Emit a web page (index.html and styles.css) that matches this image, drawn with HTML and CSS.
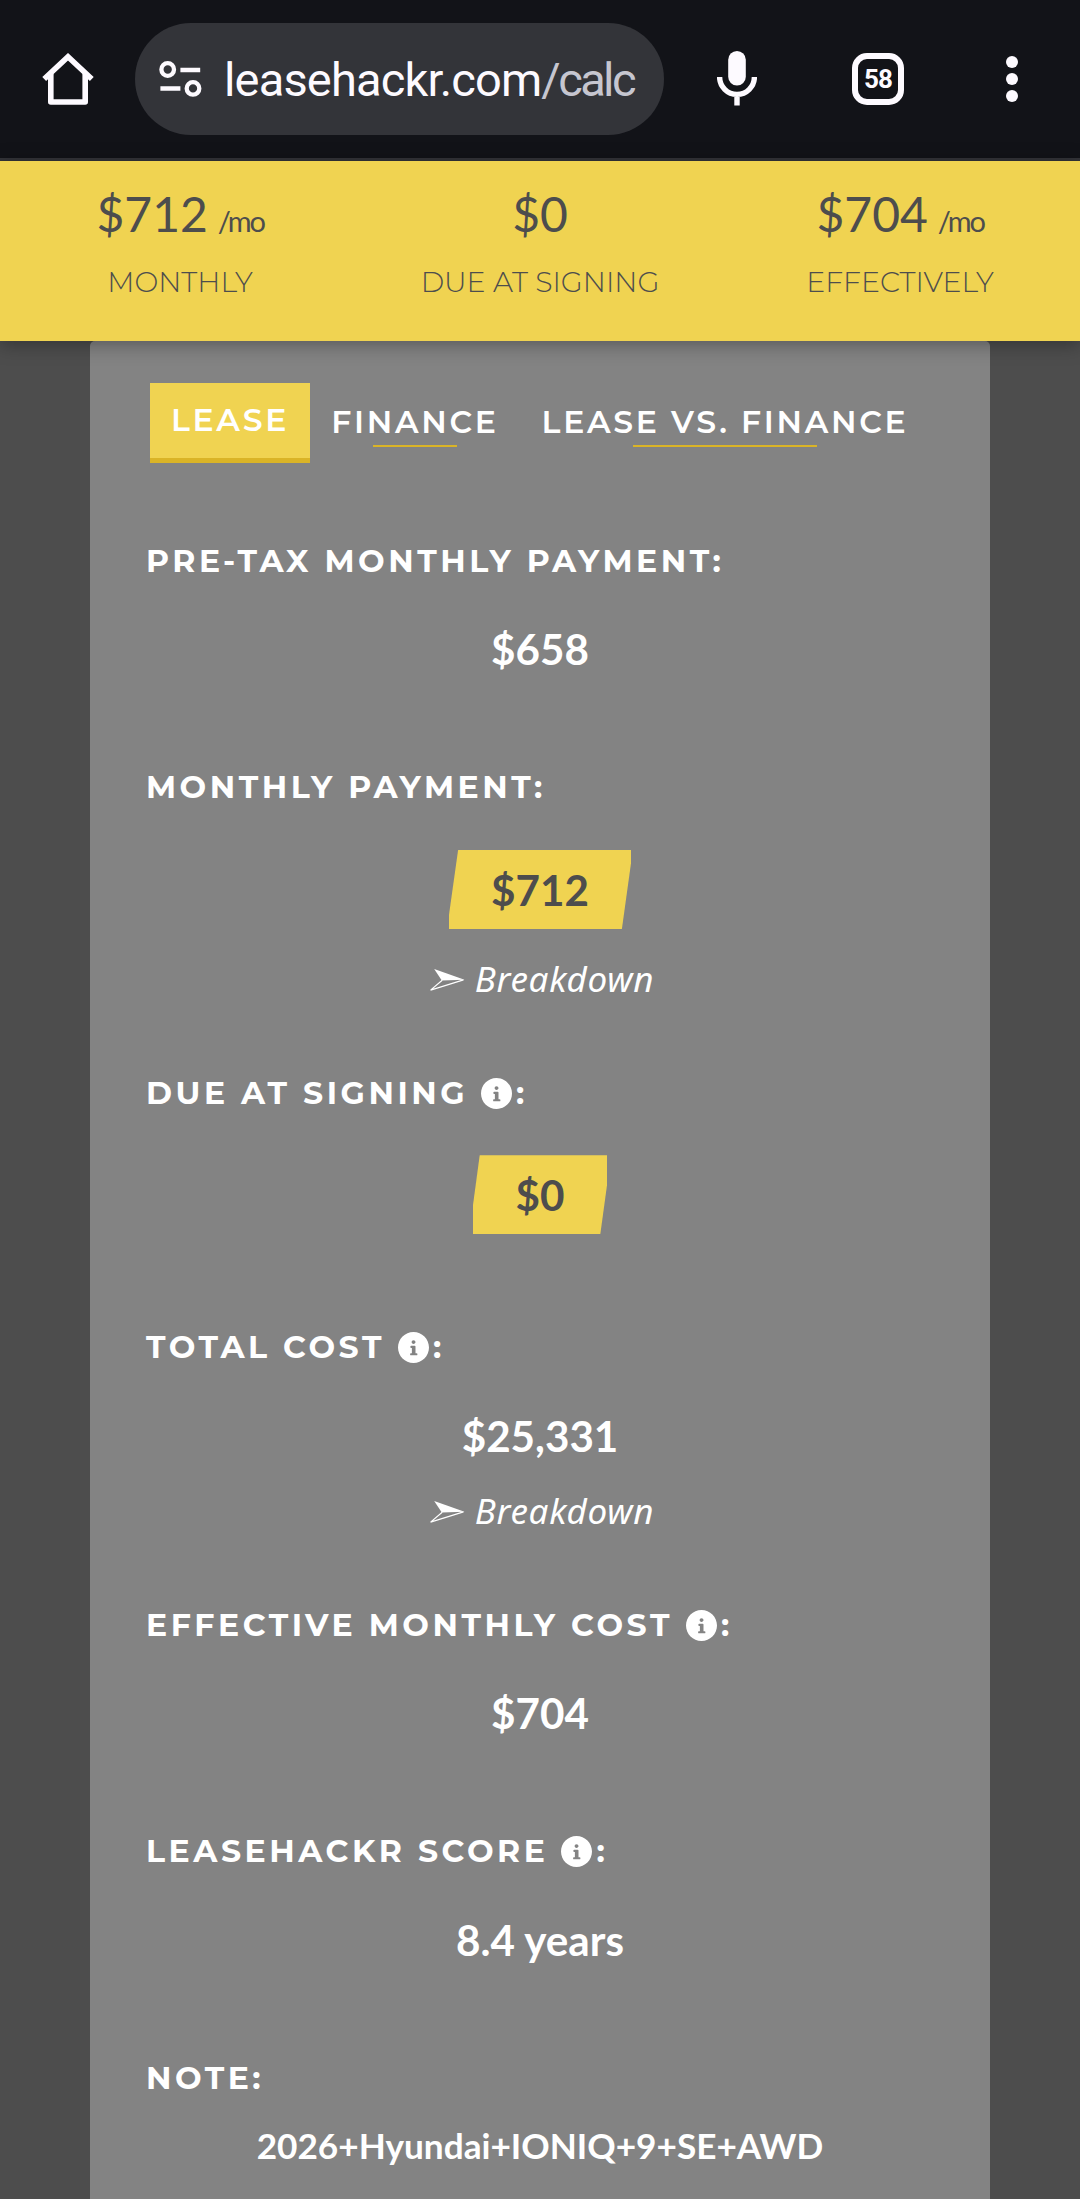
FILE: index.html
```html
<!DOCTYPE html>
<html lang="en">
<head>
  <meta charset="UTF-8">
  <meta name="viewport" content="width=device-width, initial-scale=1.0">
  <title>Leasehackr Calculator</title>
  <link rel="stylesheet" href="styles.css">
</head>
<body>
  <svg class="defs" width="0" height="0" aria-hidden="true">
    <symbol id="info" viewBox="8 8 496 496">
      <path d="M256 8C119.043 8 8 119.083 8 256c0 136.997 111.043 248 248 248s248-111.003 248-248C504 119.083 392.957 8 256 8zm0 130c18 0 32 14 32 30s-14 30-32 30-30-14-30-30 12-30 30-30zm62 232c0 6.627-5.373 10-12 10h-92c-6.627 0-12-3.373-12-10v-14c0-6.627 5.373-10 12-10h16v-84h-12c-6.627 0-12-3.373-12-10v-14c0-6.627 5.373-10 12-10h58c6.627 0 12 5.373 12 12v106h18c6.627 0 12 3.373 12 10v14z"/>
    </symbol>
    <symbol id="arrow" viewBox="0 0 36 22">
      <path d="M5.2 0L35.5 10.8L12.8 11.4Z"/>
      <path d="M13.2 11.2L1.6 21.1L34.5 10.9" fill="none" stroke="currentColor" stroke-width="1.2"/>
    </symbol>
  </svg>

  <div class="browser-bar">
    <svg class="home" width="52" height="52" viewBox="0 0 52 52" fill="none" stroke="currentColor" stroke-width="5.6" stroke-linejoin="round">
      <path d="M2.2 26L26 3.8L49.8 26" stroke-linejoin="miter"/>
      <path d="M8.8 21V49H43.2V21"/>
    </svg>
    <div class="address">
      <svg width="43" height="38" viewBox="0 0 43 38" fill="none" stroke="currentColor" stroke-width="4.3">
        <circle cx="8.7" cy="9.5" r="6.3"/>
        <path d="M21.4 10H41.2M1.4 28.5H21.4"/>
        <circle cx="34" cy="28.4" r="6.3"/>
      </svg>
      <span class="url">leasehackr.com</span><span class="path">/calc</span>
    </div>
    <svg class="mic" width="40" height="56" viewBox="0 0 40 56">
      <rect x="11.2" y="0" width="17.6" height="34.5" rx="8.8" fill="currentColor"/>
      <path d="M2.6 26a17.4 17.4 0 0 0 34.8 0M20 43V54.5" fill="none" stroke="currentColor" stroke-width="5.4"/>
    </svg>
    <div class="tab-count">58</div>
    <svg class="menu" width="12" height="48" viewBox="0 0 12 48" fill="currentColor">
      <circle cx="6" cy="7" r="6"/>
      <circle cx="6" cy="24" r="6"/>
      <circle cx="6" cy="41" r="6"/>
    </svg>
  </div>

  <header class="summary">
    <div class="summary-item">
      <div class="amount">$712<small>/mo</small></div>
      <div class="caption">MONTHLY</div>
    </div>
    <div class="summary-item">
      <div class="amount">$0</div>
      <div class="caption">DUE AT SIGNING</div>
    </div>
    <div class="summary-item">
      <div class="amount">$704<small>/mo</small></div>
      <div class="caption">EFFECTIVELY</div>
    </div>
  </header>

  <main class="panel">
    <nav class="tabs">
      <a class="tab active">LEASE</a>
      <a class="tab finance">FINANCE</a>
      <a class="tab versus">LEASE VS. FINANCE</a>
    </nav>

    <section class="item">
      <h4 class="label">PRE-TAX MONTHLY PAYMENT:</h4>
      <div class="value">$658</div>
    </section>

    <section class="item">
      <h4 class="label">MONTHLY PAYMENT:</h4>
      <div class="value highlight">$712</div>
      <div class="breakdown"><svg width="36" height="22"><use href="#arrow"/></svg>Breakdown</div>
    </section>

    <section class="item">
      <h4 class="label">DUE AT SIGNING<svg width="31" height="31"><use href="#info"/></svg>:</h4>
      <div class="value highlight short">$0</div>
    </section>

    <section class="item">
      <h4 class="label">TOTAL COST<svg width="31" height="31"><use href="#info"/></svg>:</h4>
      <div class="value">$25,331</div>
      <div class="breakdown"><svg width="36" height="22"><use href="#arrow"/></svg>Breakdown</div>
    </section>

    <section class="item">
      <h4 class="label">EFFECTIVE MONTHLY COST<svg width="31" height="31"><use href="#info"/></svg>:</h4>
      <div class="value">$704</div>
    </section>

    <section class="item">
      <h4 class="label">LEASEHACKR SCORE<svg width="31" height="31"><use href="#info"/></svg>:</h4>
      <div class="value">8.4 years</div>
    </section>

    <section class="item">
      <h4 class="label">NOTE:</h4>
      <div class="note">2026+Hyundai+IONIQ+9+SE+AWD</div>
    </section>
  </main>
</body>
</html>
```
FILE: styles.css
```css
* {
  box-sizing: border-box;
}
body {
  margin: 0;
  height: 2199px;
  overflow: hidden;
  background-color: #4d4d4d;
  color: #fff;
  font-family: Lato, sans-serif;
}
.defs {
  display: block;
}

/* browser toolbar */
.browser-bar {
  display: flex;
  align-items: center;
  height: 161px;
  padding-left: 42px;
  background-color: #121318;
  border-bottom: 3px solid #333439;
  color: #fdfaff;
}
.address {
  display: flex;
  align-items: center;
  width: 529px;
  height: 112px;
  margin-left: 41px;
  padding-left: 24px;
  border-radius: 56px;
  background-color: #333439;
  font-family: Roboto, sans-serif;
  font-size: 47px;
}
.url {
  margin-left: 22px;
  letter-spacing: -0.84px;
}
.path {
  color: #c6c6d0;
  letter-spacing: -2.6px;
}
.mic {
  margin-left: 53px;
}
.tab-count {
  display: flex;
  align-items: center;
  justify-content: center;
  width: 52px;
  height: 52px;
  margin-left: 95px;
  border: 6px solid #fdfaff;
  border-radius: 15px;
  font: bold 26px/1 Roboto, sans-serif;
  letter-spacing: -1px;
}
.menu {
  margin-left: 102px;
}

/* sticky totals */
.summary {
  position: relative;
  z-index: 1;
  display: grid;
  grid-template-columns: repeat(3, 1fr);
  height: 180px;
  padding-top: 24px;
  background-color: #f0d351;
  color: #4d4d4d;
  text-align: center;
  box-shadow: 0 3px 18px rgba(0, 0, 0, 0.35);
}
.amount {
  height: 58px;
  font-size: 48px;
  line-height: 58px;
}
.amount small {
  margin-left: 10px;
  font-size: 29px;
  line-height: 1;
  letter-spacing: -2.3px;
}
.caption {
  margin-top: 19px;
  font-family: Montserrat, Inter, sans-serif;
  font-size: 28.4px;
  font-weight: 300;
  line-height: 40px;
}

/* results */
.panel {
  height: 1900px;
  margin: 0 90px;
  padding: 42px 56px 0;
  border-radius: 5px;
  background-color: #838383;
}
.tabs {
  display: flex;
  height: 80px;
  margin: 0 4px 78px;
}
.tab {
  padding-top: 19px;
  font-family: Montserrat, Inter, sans-serif;
  font-size: 31.5px;
  font-weight: 600;
  line-height: 40px;
  letter-spacing: 2.7px;
  text-align: center;
  white-space: nowrap;
}
.active {
  width: 160px;
  padding-top: 17px;
  background-color: #f0d351;
  border-bottom: 5px solid #dab427;
}
.finance {
  width: 210px;
}
.versus {
  width: 410px;
}
.finance::after,
.versus::after {
  content: "";
  display: block;
  width: 84px;
  height: 2px;
  margin: 3px auto 0;
  background-color: #dab427;
}
.versus::after {
  width: 184px;
}
.item {
  display: flow-root;
  margin-bottom: 79.1px;
}
.label {
  display: flex;
  align-items: center;
  height: 40px;
  margin: 0 0 28.4px;
  padding-top: 1px;
  font-family: Montserrat, Inter, sans-serif;
  font-size: 31.5px;
  font-weight: 700;
  line-height: 39px;
  letter-spacing: 3.54px;
}
.label svg {
  margin: 0 4px 0 13px;
  fill: #fff;
}
.value {
  height: 79px;
  font-size: 42.2px;
  font-weight: 700;
  line-height: 79px;
  text-align: center;
}
.highlight {
  width: 182px;
  margin: 42.4px auto 14px;
  background-color: #f0d351;
  color: #4d4d4d;
  clip-path: polygon(5% 0, 100% 0, 100% 17%, 95% 100%, 0 100%, 0 82%);
}
.short {
  width: 134px;
  clip-path: polygon(5% 0, 100% 0, 100% 38%, 95% 100%, 0 100%, 0 63%);
}
.breakdown {
  display: flex;
  align-items: center;
  justify-content: center;
  gap: 10px;
  height: 40px;
  margin: 16px 0 -5.1px 3px;
  font-family: "Noto Sans", sans-serif;
  font-size: 35px;
  font-style: italic;
  letter-spacing: 0.7px;
}
.highlight + .breakdown {
  margin-top: 30px;
}
.breakdown svg {
  margin-top: 3px;
  fill: #fff;
}
.note {
  font-size: 35.2px;
  font-weight: 700;
  line-height: 39px;
  text-align: center;
}
```
